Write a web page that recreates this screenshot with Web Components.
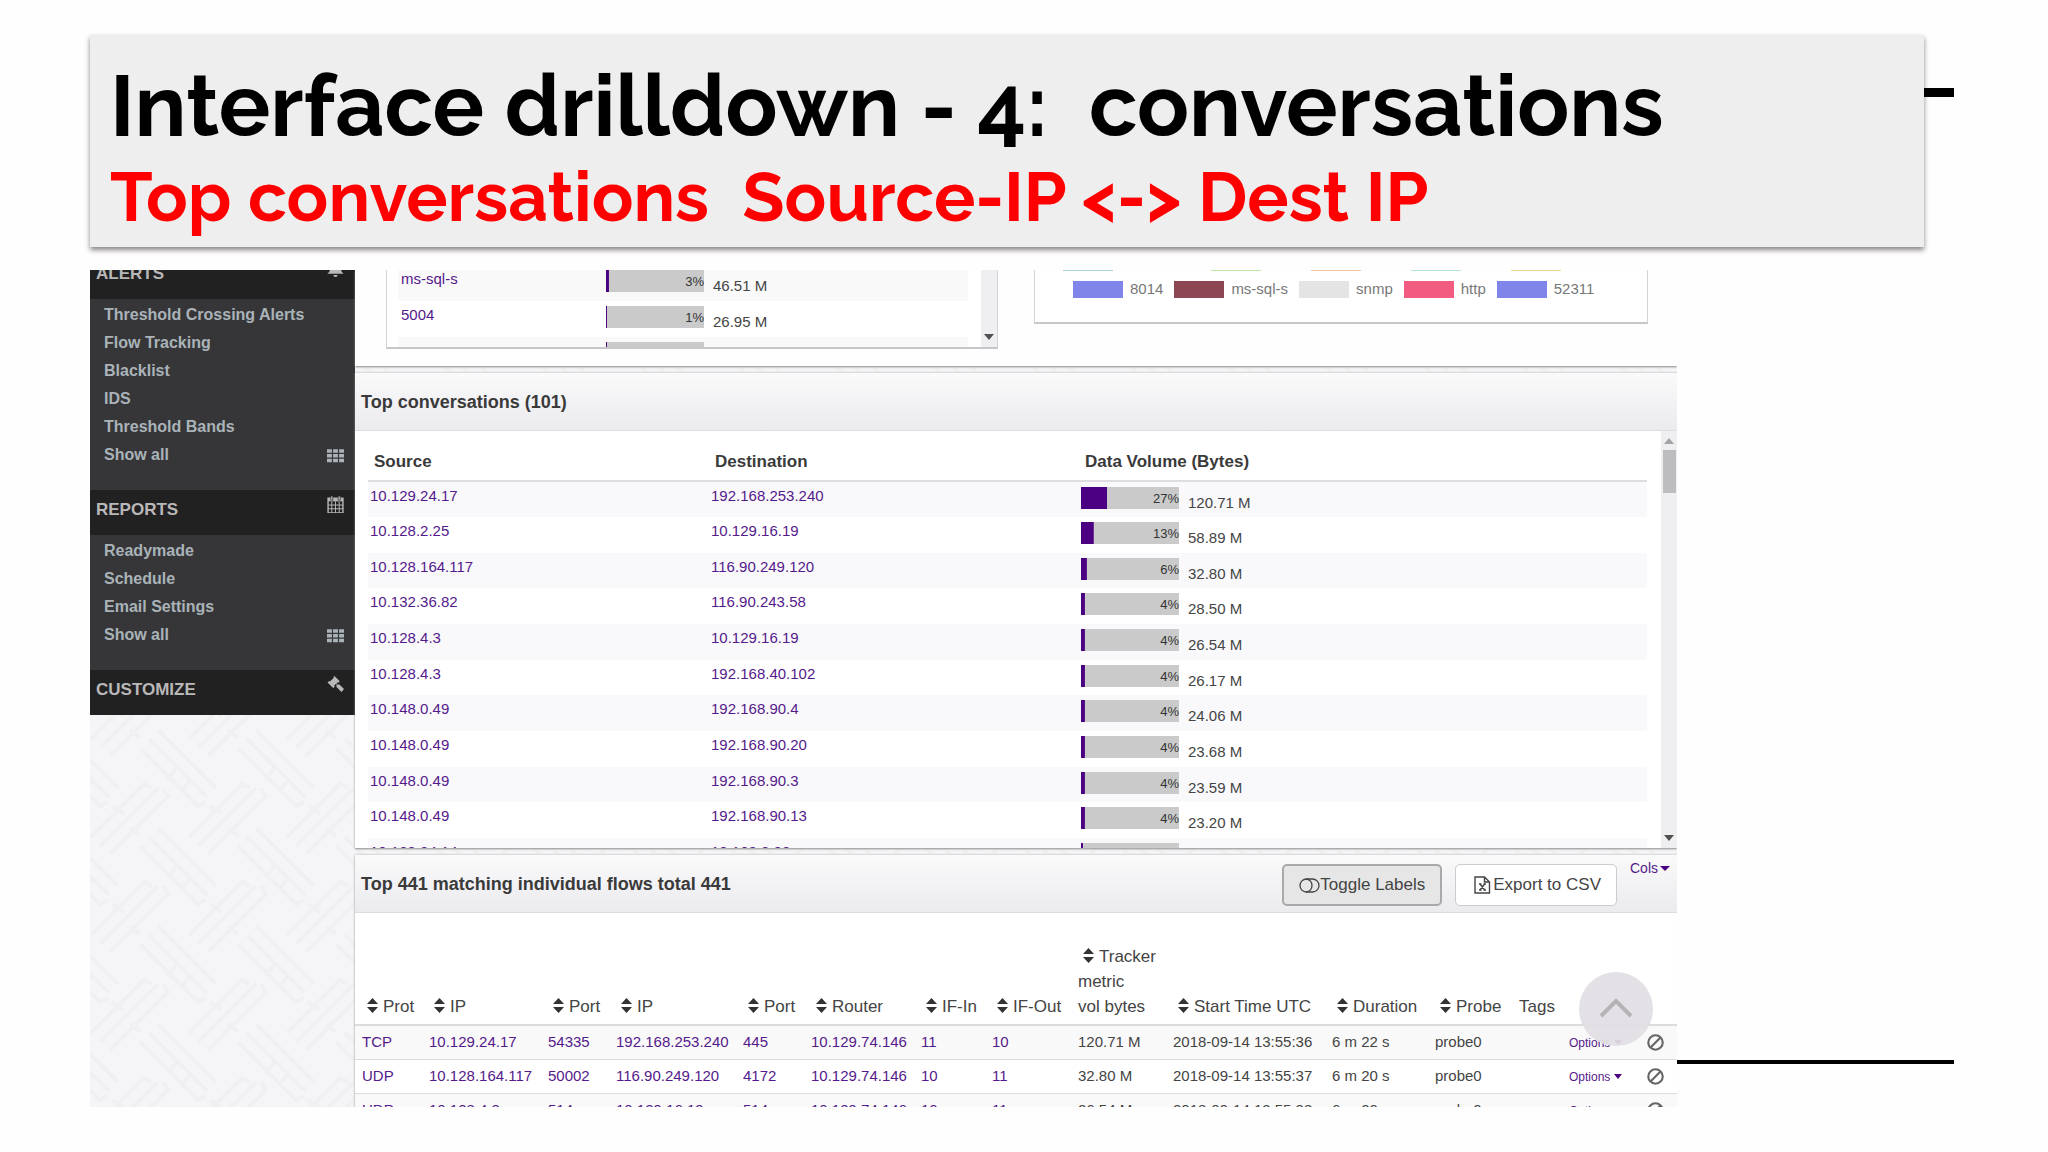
<!DOCTYPE html>
<html lang="en">
<head>
<meta charset="utf-8">
<title>Interface drilldown - 4: conversations</title>
<style>
body{
    margin:0;
    background-color:#fefefe;
    color:#444;
    font-family:"Liberation Sans",Arial,sans-serif;
}
</style>
</head>
<body>
<slide-page>
    <slide-title slot="title">
        Interface drilldown - 4:&nbsp; conversations
        <span slot="sub">Top conversations&nbsp; Source-IP &lt;-&gt; Dest IP</span>
    </slide-title>
    <nav-menu slot="side">
        <nav-section heading="ALERTS" icon="bell" items="Threshold Crossing Alerts,Flow Tracking,Blacklist,IDS,Threshold Bands,Show all" class="first"></nav-section>
        <nav-section heading="REPORTS" icon="calendar" items="Readymade,Schedule,Email Settings,Show all"></nav-section>
        <nav-section heading="CUSTOMIZE" icon="gavel" items=""></nav-section>
    </nav-menu>
    <app-overview></app-overview>
    <app-panel>
        <span slot="heading">Top conversations (101)</span>
        <conversation-table></conversation-table>
    </app-panel>
    <app-panel>
        <span slot="heading">Top 441 matching individual flows total 441</span>
        <flow-actions slot="actions"></flow-actions>
        <flow-table></flow-table>
    </app-panel>
</slide-page>

<script>
const icons={
    bell:'<path d="M8 0a1 1 0 0 1 1 1v1c3 .5 4 3 4 5 0 3 1 5 3 6H0c2-1 3-3 3-6 0-2 1-4.500 4-5V1a1 1 0 0 1 1-1zM6 14h4a2 2 0 0 1-4 0z"/>',
    calendar:'<path d="M1 2h14v14H1z" fill="none" stroke="currentColor" stroke-width="1.300"/><path d="M1 2h14v3H1z"/><path d="M1 8.500h14M1 12h14M4.500 5v11M8 5v11M11.500 5v11" stroke="currentColor" stroke-width=".9"/><path d="M3.500 0h2v4h-2zM10.500 0h2v4h-2z" stroke="#222" stroke-width=".6"/>',
    gavel:'<path d="M7 0l5 5-1.400 1.400-.6-.4-1.200 1.200 1 1 1.600-.5 4.600 4.600-2.400 2.700-4.900-4.900.5-1.600-1-1-1.400 1.400.5.700L6 11.600.5 6.100 2 4.700l.7.5 3.800-3.600-.6-.6z"/>',
    grid:'<path d="M0 2h4.600v3.400H0zM5.700 2h4.600v3.400H5.700zM11.400 2H16v3.400h-4.600zM0 6.500h4.600v3.400H0zM5.700 6.500h4.600v3.400H5.700zM11.400 6.500H16v3.400h-4.600zM0 11h4.600v3.400H0zM5.700 11h4.600v3.400H5.700zM11.400 11H16v3.400h-4.600z"/>',
    ban:'<circle cx="8" cy="8" r="6.800" fill="none" stroke="currentColor" stroke-width="2"/><path d="M3.500 12.500l9-9" stroke="currentColor" stroke-width="2"/>'
};

function icon(name){
    return `<svg width="17" height="17" viewBox="0 0 16 16" fill="currentColor" aria-hidden="true">${icons[name]}</svg>`;
}

function attach(el,html){
    el.attachShadow({mode:'open'}).innerHTML=html;
}

// faint woven lines behind the panels
const weave=`<svg xmlns="http://www.w3.org/2000/svg" xmlns:xlink="http://www.w3.org/1999/xlink" width="98" height="98">
<g fill="none" stroke="#f0f0f2" stroke-width="4">
<path d="M10 86L68 28M1 77L54 24l8 4M20 94L78 36l-5-8M22 46l12 8M40 68l10 8"/>
<g id="b"><path d="M59-21L117 37M50-12L108 46l8-4M68-30L126 28M78 20l8-12M92 30l8-10"/></g>
<use xlink:href="#b" y="98"/><use xlink:href="#b" x="-98"/><use xlink:href="#b" x="-98" y="98"/>
</g></svg>`;

class SlidePage extends HTMLElement{
    constructor(){
        super();
        attach(this,`
<style>
:host{
    display:flex;
    flex-direction:column;
    gap:23px;
    box-sizing:border-box;
    height:100vh;
    padding:35px 94px 45px 90px;
}
.top{
    display:flex;
}
.top slot{
    display:block;
    flex:1;
}
.tick{
    width:30px;
    height:9px;
    margin-top:53px;
    background-color:#000;
}
.body{
    display:flex;
    flex:1;
    min-height:0;
}
.shot{
    position:relative;
    display:flex;
    flex:1;
    min-width:0;
    overflow:hidden;
    background:#f5f5f7 url('data:image/svg+xml,${encodeURIComponent(weave)}');
}
main{
    display:flex;
    flex-direction:column;
    gap:6px;
    flex:1;
    min-width:0;
}
.line{
    align-self:flex-end;
    width:277px;
    height:4px;
    margin-bottom:43px;
    background-color:#000;
}
.up{
    position:absolute;
    right:24px;
    bottom:61px;
    width:74px;
    height:74px;
    padding:0;
    border:0;
    border-radius:50%;
    background-color:rgba(225,223,227,.94);
}
</style>
<div class="top"><slot name="title"></slot><div class="tick"></div></div>
<div class="body">
    <div class="shot">
        <slot name="side"></slot>
        <main><slot></slot></main>
        <button class="up" aria-label="Back to top"><svg width="34" height="20" viewBox="0 0 34 20"><path d="M2 18L17 3l15 15" fill="none" stroke="#b5b3b6" stroke-width="4"/></svg></button>
    </div>
    <div class="line"></div>
</div>`);
    }
}

class SlideTitle extends HTMLElement{
    constructor(){
        super();
        attach(this,`
<style>
:host{
    display:block;
    box-sizing:border-box;
    padding:18px 20px 12px;
    background-color:#eee;
    box-shadow:0 3px 5px rgba(60,50,60,.6);
    font-family:Raleway,Lato,sans-serif;
    font-weight:700;
}
h1,h2{
    margin:0;
    font-weight:700;
    white-space:nowrap;
}
h1{
    color:#000;
    font-size:86px;
    line-height:106px;
}
h2{
    color:#f00;
    font-size:69px;
    line-height:76px;
}
</style>
<h1><slot></slot></h1>
<h2><slot name="sub"></slot></h2>`);
    }
}

class NavMenu extends HTMLElement{
    constructor(){
        super();
        attach(this,`
<style>
:host{
    display:block;
    flex:none;
    width:265px;
}
::slotted(.first){
    margin-top:-16px;
}
</style>
<slot></slot>`);
    }
}

class NavSection extends HTMLElement{
    connectedCallback(){
        if(this.shadowRoot) return;
        const items=this.getAttribute('items').split(',').filter(Boolean);
        attach(this,`
<style>
:host{
    display:block;
    background-color:#363638;
    color:#a9b3b8;
    font-weight:700;
}
h3{
    display:flex;
    justify-content:space-between;
    margin:0;
    padding:6px 11px 11px 6px;
    background-color:#222122;
    color:#b9b8b8;
    font-size:17px;
    line-height:28px;
}
ul{
    margin:0;
    padding:2px 11px 21px 14px;
    list-style:none;
    font-size:16px;
    line-height:28px;
}
a{
    display:flex;
    justify-content:space-between;
    align-items:center;
    color:inherit;
    text-decoration:none;
}
</style>
<h3>${this.getAttribute('heading')}${icon(this.getAttribute('icon'))}</h3>
${items.length?`<ul>${items.map(t=>`<li><a href="#">${t}${t==='Show all'?icon('grid'):''}</a></li>`).join('')}</ul>`:''}`);
    }
}

// usage bar with its share and the volume next to it
class VolumeBar extends HTMLElement{
    connectedCallback(){
        if(this.shadowRoot) return;
        const share=this.getAttribute('share');
        attach(this,`
<style>
:host{
    display:flex;
    gap:9px;
    font-size:15px;
    line-height:20px;
}
.bar{
    width:98px;
    height:22px;
    margin-top:5px;
    background:linear-gradient(#4b0082,#4b0082) no-repeat 0 0/${share}% 100% #cacaca;
    color:#333;
    font-size:13px;
    line-height:23px;
    text-align:right;
}
.value{
    margin-top:11px;
}
</style>
<div class="bar">${this.textContent?share+'%':''}</div><div class="value"><slot></slot></div>`);
    }
}

class ScrollTrack extends HTMLElement{
    constructor(){
        super();
        attach(this,`
<style>
:host{
    display:flex;
    flex-direction:column;
    align-items:center;
    box-sizing:border-box;
    width:16px;
    padding:7px 0;
    background-color:#efeff1;
}
i{
    border:5px solid transparent;
    border-top-width:0;
    border-bottom:6px solid #a3a3a5;
}
b{
    width:13px;
    height:43px;
    margin-top:6px;
    background-color:#bdbcbf;
}
i:last-child{
    margin-top:auto;
    border-bottom-width:0;
    border-top:6px solid #505050;
}
:host([tail]) i:first-of-type,
:host([tail]) b{
    display:none;
}
</style>
<i></i><b></b><i></i>`);
    }
}

class AppOverview extends HTMLElement{
    constructor(){
        super();
        const legend=[['#8085e9','8014'],['#8d4654','ms-sql-s'],['#e4e4e4','snmp'],['#f15c80','http'],['#8085e9','52311']];
        attach(this,`
<style>
:host{
    display:flex;
    flex:none;
    align-items:flex-start;
    justify-content:space-between;
    height:96px;
    padding:0 29px 0 31px;
    background-color:#fefefe;
    box-shadow:0 1px 2px #888;
}
.card{
    display:flex;
    box-sizing:border-box;
    overflow:hidden;
    border:1px solid #d5d3d8;
    border-top:0;
    border-bottom:2px solid #c8c6cb;
    background-color:#fff;
}
.ports{
    justify-content:space-between;
    width:612px;
    height:79px;
    padding-left:11px;
}
table{
    width:570px;
    height:108px;
    margin-top:-5px;
    border-collapse:collapse;
    table-layout:fixed;
    font-size:15px;
    line-height:20px;
}
tr{
    height:36px;
}
tr:nth-child(odd){
    background-color:#f9f9fa;
}
td{
    padding:0 0 0 3px;
    vertical-align:top;
}
td:first-child{
    width:205px;
    padding-top:4px;
}
td:last-child{
    padding-left:0;
}
a{
    color:#551a8b;
    text-decoration:none;
}
.chart{
    flex-direction:column;
    width:614px;
    height:54px;
    color:#777;
    font-size:15px;
    line-height:20px;
}
.slivers{
    display:flex;
    gap:50px;
    height:1px;
    padding-left:28px;
}
.slivers i{
    width:50px;
}
.slivers i:first-child{
    margin-right:48px;
}
ul{
    display:flex;
    gap:11px;
    margin:8px 0 0;
    padding:0 0 0 38px;
    list-style:none;
}
li{
    display:flex;
    align-items:center;
    gap:7px;
}
li i{
    width:50px;
    height:17px;
}
</style>
<div class="card ports">
    <table>
        <tr><td><a href="#">ms-sql-s</a></td><td><volume-bar share="3">46.51 M</volume-bar></td></tr>
        <tr><td><a href="#">5004</a></td><td><volume-bar share="1">26.95 M</volume-bar></td></tr>
        <tr><td></td><td><volume-bar share="1"></volume-bar></td></tr>
    </table>
    <scroll-track tail></scroll-track>
</div>
<div class="card chart">
    <div class="slivers">${['#a9d5d0','#bfe6a8','#f3c79b','#b5e5d8','#ecd98f'].map(c=>`<i style="background-color:${c}"></i>`).join('')}</div>
    <ul>${legend.map(([c,t])=>`<li><i style="background-color:${c}"></i>${t}</li>`).join('')}</ul>
</div>`);
    }
}

class AppPanel extends HTMLElement{
    constructor(){
        super();
        attach(this,`
<style>
:host{
    display:block;
    flex:none;
    background-color:#fff;
    box-shadow:0 1px 2px #888;
}
header{
    display:flex;
    justify-content:space-between;
    box-sizing:border-box;
    height:59px;
    padding-left:6px;
    border-top:1px solid #dcdcde;
    border-bottom:1px solid #dddcdf;
    background:linear-gradient(#fafafb,#ebeaed);
}
h2{
    margin:0;
    color:#3a3a3a;
    font-size:18px;
    line-height:58px;
}
</style>
<header><h2><slot name="heading"></slot></h2><slot name="actions"></slot></header>
<slot></slot>`);
    }
}

class ConversationTable extends HTMLElement{
    constructor(){
        super();
        const rows=[
            ['10.129.24.17','192.168.253.240',27,'120.71 M'],
            ['10.128.2.25','10.129.16.19',13,'58.89 M'],
            ['10.128.164.117','116.90.249.120',6,'32.80 M'],
            ['10.132.36.82','116.90.243.58',4,'28.50 M'],
            ['10.128.4.3','10.129.16.19',4,'26.54 M'],
            ['10.128.4.3','192.168.40.102',4,'26.17 M'],
            ['10.148.0.49','192.168.90.4',4,'24.06 M'],
            ['10.148.0.49','192.168.90.20',4,'23.68 M'],
            ['10.148.0.49','192.168.90.3',4,'23.59 M'],
            ['10.148.0.49','192.168.90.13',4,'23.20 M'],
            ['10.129.24.14','10.128.2.22',2,'']
        ];
        attach(this,`
<style>
:host{
    display:flex;
    height:417px;
    overflow:hidden;
}
.rows{
    flex:1;
    padding:0 14px 0 13px;
}
table{
    width:100%;
    border-collapse:collapse;
    table-layout:fixed;
    font-size:15px;
    line-height:20px;
}
th{
    height:50px;
    box-sizing:border-box;
    padding:12px 6px 0;
    border-bottom:2px solid #dddddf;
    color:#3a3a3a;
    font-size:17px;
    text-align:left;
}
th:nth-child(1){
    width:341px;
}
th:nth-child(2){
    width:370px;
}
tbody tr{
    height:36px;
}
/* three rows share 107px */
tbody tr:nth-child(3n){
    height:35px;
}
tbody tr:nth-child(odd){
    background-color:#f9f9fb;
}
td{
    padding:4px 2px 0;
    vertical-align:top;
}
td:last-child{
    padding:0 2px;
}
a{
    color:#551a8b;
    text-decoration:none;
}
</style>
<div class="rows"><table>
    <thead><tr><th>Source</th><th>Destination</th><th>Data Volume (Bytes)</th></tr></thead>
    <tbody>${rows.map(r=>`<tr><td><a href="#">${r[0]}</a></td><td><a href="#">${r[1]}</a></td><td><volume-bar share="${r[2]}">${r[3]}</volume-bar></td></tr>`).join('')}</tbody>
</table></div>
<scroll-track></scroll-track>`);
    }
}

class FlowActions extends HTMLElement{
    constructor(){
        super();
        attach(this,`
<style>
:host{
    display:flex;
    align-items:flex-start;
    gap:13px;
    padding-right:7px;
}
button{
    box-sizing:border-box;
    height:42px;
    margin-top:9px;
    padding:0 15px;
    display:flex;
    align-items:center;
    border:1px solid #ccc;
    border-radius:5px;
    background-color:#fff;
    color:#444;
    font:17px "Liberation Sans",Arial,sans-serif;
}
.on{
    border:2px solid #a9a9ab;
    background-color:#e6e6e6;
}
.csv{
    padding:0 15px 0 18px;
    gap:2px;
}
a{
    display:flex;
    align-items:center;
    gap:2px;
    margin-top:3px;
    color:#551a8b;
    font-size:14px;
    line-height:20px;
    text-decoration:none;
}
i{
    border:5px solid transparent;
    border-top:5px solid #4b0082;
    border-bottom:0;
}
</style>
<button class="on"><svg width="21" height="15" viewBox="0 0 21 15" fill="none" stroke="#444" stroke-width="1.300"><rect x="1" y="1" width="19" height="13" rx="6.500"/><path d="M7 1a6 6.500 0 0 1 0 13"/></svg>Toggle Labels</button>
<button class="csv"><svg width="17" height="18" viewBox="0 0 17 18" fill="none" stroke="#444" stroke-width="1.400"><path d="M1 1h9.500l5 5v11H1zM10.500 1v5h5M5 8h2.500M9.500 8H12M5 14h2.500M9.500 14H12M6 8l4.700 6M10.700 8L6 14"/></svg>Export to CSV</button>
<a href="#">Cols<i></i></a>`);
    }
}

class FlowTable extends HTMLElement{
    constructor(){
        super();
        const cols=[['Prot',67],['IP',119],['Port',68],['IP',127],['Port',68],['Router',110],['IF-In',71],['IF-Out',86],['Tracker<br>metric<br>vol bytes',95],['Start Time UTC',159],['Duration',103],['Probe',84],['Tags',50],['',78],['',37]];
        const rows=[
            ['TCP','10.129.24.17','54335','192.168.253.240','445','10.129.74.146','11','10','120.71 M','2018-09-14 13:55:36','6 m 22 s','probe0'],
            ['UDP','10.128.164.117','50002','116.90.249.120','4172','10.129.74.146','10','11','32.80 M','2018-09-14 13:55:37','6 m 20 s','probe0'],
            ['UDP','10.128.4.3','514','10.129.16.19','514','10.129.74.146','10','11','26.54 M','2018-09-14 13:55:38','6 m 20 s','probe0']
        ];
        const sort='<svg width="11" height="15" viewBox="0 0 11 15" aria-hidden="true"><path d="M0 6L5.500 0 11 6zM0 9h11l-5.500 6z" fill="#333"/></svg>';
        const head=([t,w])=>`<th style="width:${w}px">${t&&t!=='Tags'?`<button>${sort}${t}</button>`:t}</th>`;
        const cell=(t,i)=>`<td>${i<8?`<a href="#">${t}</a>`:t}</td>`;
        attach(this,`
<style>
:host{
    display:block;
}
table{
    width:100%;
    border-collapse:collapse;
    table-layout:fixed;
    font-size:15px;
    line-height:20px;
    white-space:nowrap;
}
th{
    box-sizing:border-box;
    padding:31px 0 5px 7px;
    border-bottom:2px solid #dcdcdd;
    font-size:17px;
    font-weight:400;
    line-height:25px;
    text-align:left;
    vertical-align:bottom;
}
button{
    padding:0;
    border:0;
    background:none;
    color:inherit;
    font:inherit;
    text-align:left;
}
th svg{
    margin:0 5px 0 5px;
    vertical-align:-1px;
}
tbody tr{
    height:34px;
}
tbody tr:nth-child(odd){
    background-color:#f9f9fa;
}
td{
    padding:0 0 0 7px;
    border-bottom:1px solid #dcdcde;
}
a,.options{
    color:#551a8b;
    text-decoration:none;
}
.options{
    font-size:12px;
}
.options i{
    display:inline-block;
    margin-left:4px;
    border:4px solid transparent;
    border-top:5px solid #4b0082;
    border-bottom:0;
    vertical-align:2px;
}
td svg{
    display:block;
    color:#666;
}
</style>
<table>
    <thead><tr>${cols.map(head).join('')}</tr></thead>
    <tbody>${rows.map(r=>`<tr>${r.map(cell).join('')}<td></td><td><button class="options">Options<i></i></button></td><td>${icon('ban')}</td></tr>`).join('')}</tbody>
</table>`);
    }
}

customElements.define('slide-page',SlidePage);
customElements.define('slide-title',SlideTitle);
customElements.define('nav-menu',NavMenu);
customElements.define('nav-section',NavSection);
customElements.define('volume-bar',VolumeBar);
customElements.define('scroll-track',ScrollTrack);
customElements.define('app-overview',AppOverview);
customElements.define('app-panel',AppPanel);
customElements.define('conversation-table',ConversationTable);
customElements.define('flow-actions',FlowActions);
customElements.define('flow-table',FlowTable);
</script>
</body>
</html>
